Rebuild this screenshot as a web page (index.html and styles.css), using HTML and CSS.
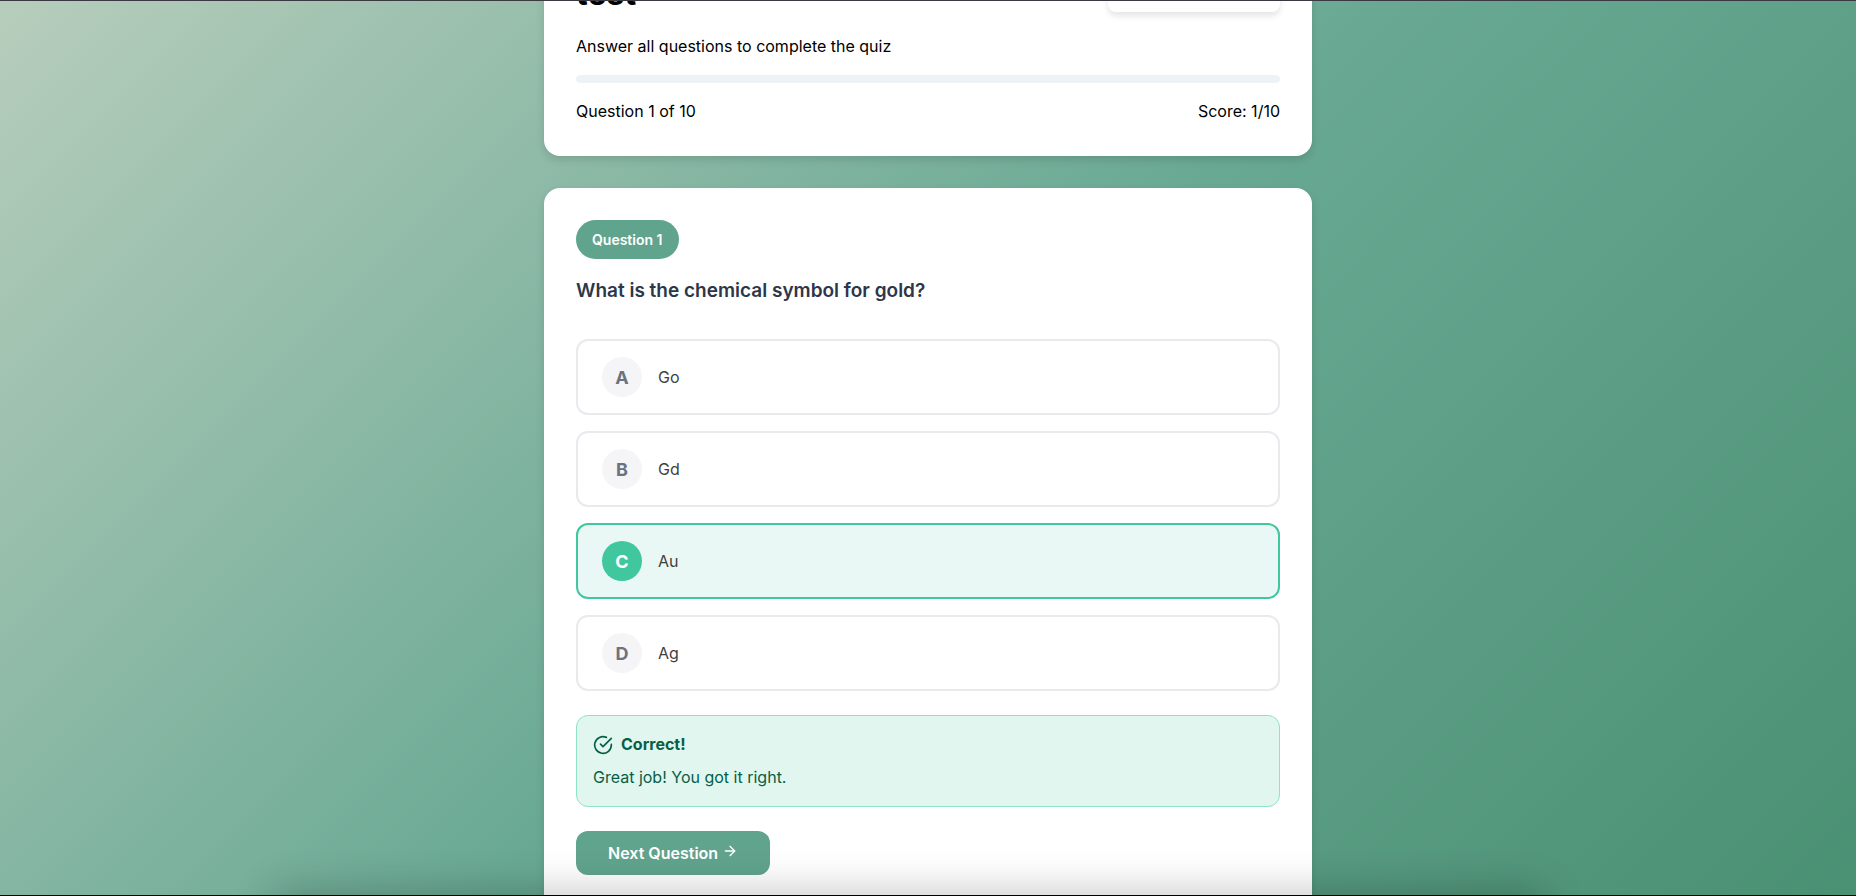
FILE: index.html
```html
<!DOCTYPE html>
<html lang="en">
<head>
<meta charset="utf-8">
<meta name="viewport" content="width=device-width, initial-scale=1">
<title>Quiz</title>
<link rel="stylesheet" href="styles.css">
</head>
<body>
<main class="quiz">
  <section class="card summary">
    <header class="summary-head">
      <h1 class="quiz-title">test</h1>
      <button class="back" type="button" aria-label="Back"></button>
    </header>
    <p class="text">Answer all questions to complete the quiz</p>
    <div class="progress" role="progressbar" aria-label="Quiz progress" aria-valuemin="0" aria-valuemax="10" aria-valuenow="0"></div>
    <div class="stats"><span>Question 1 of 10</span><span>Score: 1/10</span></div>
  </section>
  <section class="card question">
    <span class="badge">Question 1</span>
    <h2 class="prompt">What is the chemical symbol for gold?</h2>
    <div class="answers">
      <button class="answer" type="button"><span class="letter">A</span><span>Go</span></button>
      <button class="answer" type="button"><span class="letter">B</span><span>Gd</span></button>
      <button class="answer correct" type="button"><span class="letter">C</span><span>Au</span></button>
      <button class="answer" type="button"><span class="letter">D</span><span>Ag</span></button>
    </div>
    <div class="feedback" role="status">
      <p class="feedback-title">
        <svg class="check" viewBox="0 0 24 24" aria-hidden="true"><path d="M22 11.08V12a10 10 0 1 1-5.93-9.14"/><path d="M22 4 12 14.01l-3-3"/></svg>
        Correct!
      </p>
      <p class="feedback-text">Great job! You got it right.</p>
    </div>
    <button class="next" type="button">Next Question
      <svg class="arrow" viewBox="0 0 24 24" aria-hidden="true"><path d="M5 12h14"/><path d="m12 5 7 7-7 7"/></svg>
    </button>
  </section>
</main>
<div class="dock-shadow"></div>
</body>
</html>
```
FILE: styles.css
```css
* { box-sizing: border-box; }

body {
  margin: 0;
  height: 100vh;
  overflow: hidden;
  position: relative;
  background: linear-gradient(135deg, #b7cdbc 0%, #69a994 50%, #4a9073 100%);
  border-top: 1px solid #3a3840;
  border-bottom: 1px solid #000;
  font-family: Inter, "Liberation Sans", sans-serif;
  font-size: 16px;
  line-height: 25px;
  color: #000;
}

h1, h2, p { margin: 0; }
button { font: inherit; border: 0; cursor: pointer; }

.quiz {
  max-width: 768px;
  margin: -63px auto 0;
  display: flex;
  flex-direction: column;
  gap: 32px;
}

.card {
  background: #fff;
  border-radius: 16px;
  padding: 32px;
  box-shadow: 0 4px 8px rgba(0, 0, 0, 0.12);
}

.summary-head {
  display: flex;
  justify-content: space-between;
  align-items: flex-start;
  margin-bottom: 16px;
}

.quiz-title { font-size: 32px; line-height: 48px; font-weight: 700; }

.back {
  width: 172px;
  height: 42px;
  border-radius: 8px;
  background: #fff;
  box-shadow: 0 4px 6px rgba(0, 0, 0, 0.1);
}

.progress {
  height: 8px;
  margin: 16px 0;
  border-radius: 4px;
  background: #edf2f7;
}

.stats { display: flex; justify-content: space-between; }

.question { padding-bottom: 48px; }

.badge {
  display: inline-block;
  padding: 8px 16px;
  border-radius: 20px;
  background: #61a48d;
  color: #fff;
  font-size: 14px;
  line-height: 23px;
  font-weight: 600;
}

.prompt {
  margin: 16px 0 32px;
  font-size: 19px;
  line-height: 32px;
  font-weight: 600;
  color: #2d3748;
}

.answers { display: flex; flex-direction: column; gap: 16px; }

.answer {
  display: flex;
  align-items: center;
  gap: 16px;
  padding: 16px 24px;
  border: 2px solid #e9e9ee;
  border-radius: 12px;
  background: #fff;
  color: #3f3f3f;
  text-align: left;
}

.letter {
  display: grid;
  place-items: center;
  width: 40px;
  height: 40px;
  border-radius: 50%;
  background: #f5f5f8;
  color: #6b7280;
  font-size: 18px;
  font-weight: 700;
}

.correct { border-color: #40c79e; background: #e9f8f5; }
.correct .letter { background: #40c79e; color: #fff; }

.feedback {
  margin: 24px 0;
  padding: 16px;
  border: 1px solid #8fe3c5;
  border-radius: 12px;
  background: #e1f6ee;
  color: #065f46;
}

.feedback-title {
  display: flex;
  align-items: center;
  gap: 8px;
  margin-bottom: 8px;
  font-weight: 700;
}

.check, .arrow {
  fill: none;
  stroke: currentColor;
  stroke-width: 2;
  stroke-linecap: round;
  stroke-linejoin: round;
}

.check { width: 20px; height: 20px; }
.arrow { width: 16px; height: 16px; }

.next {
  padding: 10px 32px;
  border-radius: 12px;
  background: #61a48d;
  color: #fff;
  line-height: 24px;
  font-weight: 600;
}

.dock-shadow {
  position: absolute;
  left: 15%;
  right: 17%;
  top: 100%;
  height: 40px;
  box-shadow: 0 0 40px 4px rgba(0, 0, 0, 0.22);
}
```
